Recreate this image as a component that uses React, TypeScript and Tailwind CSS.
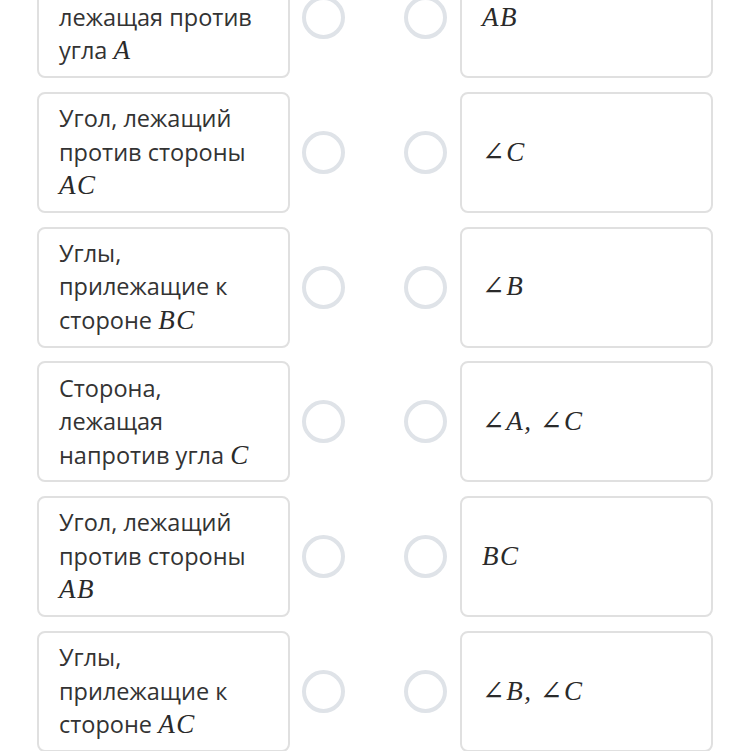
import React from 'react';

type Part = string | { m: string };

const LEFT: Part[][] = [
  ['Сторона, лежащая против угла ', { m: 'A' }],
  ['Угол, лежащий против стороны ', { m: 'AC' }],
  ['Углы, прилежащие к стороне ', { m: 'BC' }],
  ['Сторона, лежащая напротив угла ', { m: 'C' }],
  ['Угол, лежащий против стороны ', { m: 'AB' }],
  ['Углы, прилежащие к стороне ', { m: 'AC' }],
];

const RIGHT: Part[][] = [
  [{ m: 'AB' }],
  [{ m: '∠C' }],
  [{ m: '∠B' }],
  [{ m: '∠A,\u2009∠C' }],
  [{ m: 'BC' }],
  [{ m: '∠B,\u2009∠C' }],
];

const Text = ({ parts }: { parts: Part[] }) => (
  <p className="text-[23.5px] leading-[33.5px] text-[#333333]" style={{ fontFamily: '"Open Sans", sans-serif' }}>
    {parts.map((p, i) =>
      typeof p === 'string' ? (
        <span key={i}>{p}</span>
      ) : (
        <span
          key={i}
          className="italic text-[27px] tracking-[0.06em] text-[#2a2a2a]"
          style={{ fontFamily: '"Liberation Serif", "DejaVu Serif", serif' }}
        >
          {p.m}
        </span>
      )
    )}
  </p>
);

const Radio = () => <div className="w-[43px] h-[43px] shrink-0 rounded-full border-4 border-[#dfe3e8] bg-white" />;

export default function App() {
  return (
    <div className="w-[750px] h-[751px] overflow-hidden bg-white">
      <div className="-mt-[43px] flex flex-col gap-[13.75px] pl-[37px]">
        {LEFT.map((left, i) => (
          <div key={i} className="flex items-center">
            <div className="w-[253px] h-[121px] shrink-0 rounded-lg border-2 border-[#e0e0e0] pl-[20px] pr-[24px] flex items-center">
              <Text parts={left} />
            </div>
            <div className="ml-[12px]">
              <Radio />
            </div>
            <div className="ml-[59px]">
              <Radio />
            </div>
            <div className="ml-[13px] w-[253px] h-[121px] shrink-0 rounded-lg border-2 border-[#e0e0e0] pl-[20px] pr-[24px] flex items-center">
              <Text parts={RIGHT[i]} />
            </div>
          </div>
        ))}
      </div>
    </div>
  );
}
